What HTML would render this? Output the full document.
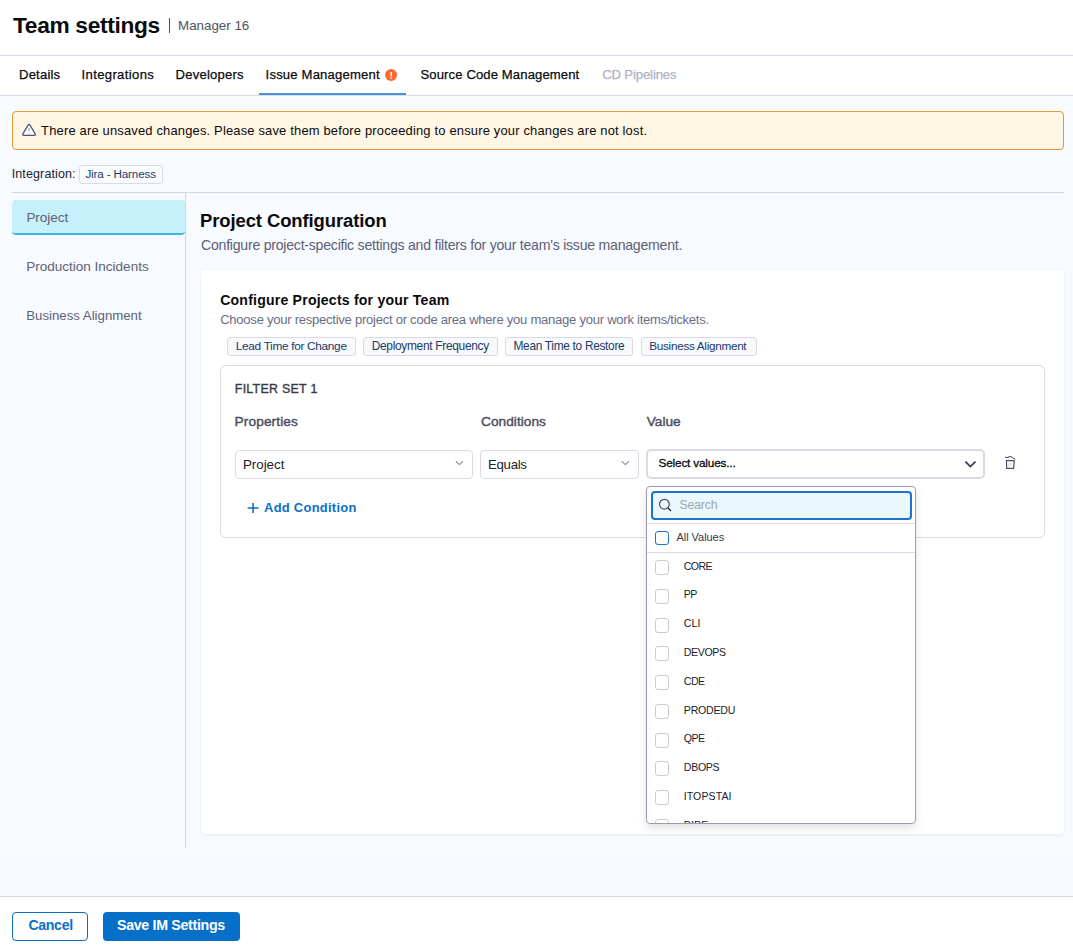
<!DOCTYPE html>
<html><head><meta charset="utf-8">
<style>
*{box-sizing:border-box;margin:0;padding:0}
html,body{width:1073px;height:951px;overflow:hidden;background:#fff;font-family:"Liberation Sans",sans-serif;color:#0b0b0d}
.a{position:absolute}
.t{position:absolute;white-space:nowrap;z-index:5;line-height:normal}
</style></head><body>
<!-- header -->
<div class="a" style="left:0;top:0;width:1073px;height:56px;background:#fff;border-bottom:1px solid #d9dae6;z-index:1"></div>
<div class="a" style="left:169px;top:18px;width:1px;height:15px;background:#4f5162;z-index:2"></div>
<!-- tabs -->
<div class="a" style="left:0;top:56px;width:1073px;height:40px;background:#fff;border-bottom:1px solid #d9dae6;z-index:1"></div>
<div class="a" style="left:259px;top:93px;width:147px;height:2px;background:#4a90dc;z-index:2"></div>
<!-- content bg -->
<div class="a" style="left:0;top:96px;width:1073px;height:800px;background:linear-gradient(to bottom,#f7fafe 0,#f7fafe 760px,#f7f8fa 772px,#f7f8fa 800px);z-index:1"></div>
<!-- alert -->
<div class="a" style="left:12px;top:111px;width:1052px;height:39px;background:#fff6e3;border:1px solid #e29739;border-radius:4px;z-index:2"></div>
<!-- integration tag -->
<div class="a" style="left:79px;top:165px;width:84px;height:19px;border:1px solid #d9dae6;border-radius:3px;background:#fafbfc;z-index:2"></div>
<div class="a" style="left:12px;top:192px;width:1052px;height:1px;background:#d3d4e4;z-index:2"></div>
<div class="a" style="left:185px;top:192px;width:1px;height:656px;background:#d3d4e4;z-index:2"></div>
<div class="a" style="left:12px;top:200px;width:173px;height:35px;background:#c6f0fa;border-bottom:2px solid #3ab8e6;border-radius:4px;z-index:2"></div>
<!-- card -->
<div class="a" style="left:201px;top:270px;width:863px;height:564px;background:#fff;border-radius:4px;box-shadow:0 0 1px rgba(40,41,61,.04),0 1px 3px rgba(96,97,112,.10);z-index:2"></div>
<!-- tags -->
<div class="a" style="left:227px;top:337px;width:129px;height:19px;border:1px solid #d9dae6;border-radius:3px;background:#f8f9fb;z-index:3"></div>
<div class="a" style="left:363px;top:337px;width:135px;height:19px;border:1px solid #d9dae6;border-radius:3px;background:#f8f9fb;z-index:3"></div>
<div class="a" style="left:505px;top:337px;width:128px;height:19px;border:1px solid #d9dae6;border-radius:3px;background:#f8f9fb;z-index:3"></div>
<div class="a" style="left:641px;top:337px;width:116px;height:19px;border:1px solid #d9dae6;border-radius:3px;background:#f8f9fb;z-index:3"></div>
<!-- filter box -->
<div class="a" style="left:220px;top:365px;width:825px;height:173px;border:1px solid #d9dae6;border-radius:6px;background:#fff;z-index:3"></div>
<!-- inputs -->
<div class="a" style="left:235px;top:450px;width:238px;height:29px;border:1px solid #d9dae6;border-radius:4px;background:#fff;z-index:4"></div>
<div class="a" style="left:480px;top:450px;width:159px;height:29px;border:1px solid #d9dae6;border-radius:4px;background:#fff;z-index:4"></div>
<div class="a" style="left:646px;top:449px;width:339px;height:30px;border:2px solid #d9dae6;border-radius:5px;background:#fff;z-index:4"></div>
<!-- footer -->
<div class="a" style="left:0;top:896px;width:1073px;height:55px;background:#fff;border-top:1px solid #d8d9de;z-index:1"></div>
<div class="a" style="left:12px;top:912px;width:76px;height:29px;border:1px solid #0a6ebd;border-radius:4px;background:#fff;z-index:2"></div>
<div class="a" style="left:103px;top:912px;width:137px;height:29px;border-radius:4px;background:#0670c9;z-index:2"></div>
<!-- main icons -->
<svg class="a" style="left:0;top:0;z-index:6" width="1073" height="951" viewBox="0 0 1073 951">
  <path d="M28.1 125.1 Q29.05 123.6 30 125.1 L35.2 133.9 Q35.9 135.3 34.4 135.3 L23.7 135.3 Q22.2 135.3 22.9 133.9 Z" fill="#fff" stroke="#4f5172" stroke-width="1.25" stroke-linejoin="round"/>
  <path d="M29.05 127.8 V131.2" stroke="#7a7c92" stroke-width="0.9"/>
  <rect x="28.6" y="132.9" width="0.9" height="0.8" fill="#7a7c92"/>
  <circle cx="391.1" cy="75" r="6" fill="#fe6b2f"/>
  <path d="M391.2 72 V76.3" stroke="#fff" stroke-width="1.5"/>
  <rect x="390.45" y="77.3" width="1.5" height="1.4" fill="#fff"/>
  <path d="M455.9 461.2 L459.4 464.7 L462.9 461.2" fill="none" stroke="#9a9cb0" stroke-width="1.3"/>
  <path d="M621.9 461.2 L625.4 464.7 L628.9 461.2" fill="none" stroke="#9a9cb0" stroke-width="1.3"/>
  <path d="M965.4 461.6 L970.4 466.6 L975.4 461.6" fill="none" stroke="#383f50" stroke-width="1.8"/>
  <path d="M1005.3 457 Q1006.6 458 1008.3 457.2 Q1010.2 455.7 1012 457.4 L1015.4 459.4" fill="none" stroke="#4f5162" stroke-width="1.1"/>
  <path d="M1005.7 460.6 H1014.6 M1006.5 461 L1006.6 468.4 H1013.6 L1014.3 461" fill="none" stroke="#4f5162" stroke-width="1.2"/>
  <path d="M1008.6 463 V466.5 M1010.9 463 V466.5" stroke="#d5d6de" stroke-width="0.9"/>
  <path d="M247.6 508 H258.5 M253.1 503 V513" stroke="#0b6fc6" stroke-width="1.6"/>
</svg>
<!-- dropdown -->
<div class="a" style="left:646px;top:486px;width:270px;height:338px;border:1px solid #9a9bb1;border-radius:4px;background:#fff;box-shadow:0 4px 8px rgba(96,97,112,.18);overflow:hidden;z-index:10">
  <div class="a" style="left:4px;top:4px;width:261px;height:29px;border:2px solid #1a73d1;border-radius:4px;background:#eaf7fd"></div>
  <div class="a" style="left:0;top:36px;width:268px;height:1px;background:#d9dae6"></div>
  <div class="a" style="left:8px;top:44px;width:14px;height:14px;border:1px solid #1a73d1;border-radius:3px"></div>
  <div class="a" style="left:0;top:65px;width:268px;height:1px;background:#d9dae6"></div>
  <div class="a" style="left:8px;top:73.00px;width:14px;height:15px;border:1px solid #c9cad3;border-radius:3px;background:#fff"></div>
<div class="a" style="left:8px;top:101.78px;width:14px;height:15px;border:1px solid #c9cad3;border-radius:3px;background:#fff"></div>
<div class="a" style="left:8px;top:130.56px;width:14px;height:15px;border:1px solid #c9cad3;border-radius:3px;background:#fff"></div>
<div class="a" style="left:8px;top:159.34px;width:14px;height:15px;border:1px solid #c9cad3;border-radius:3px;background:#fff"></div>
<div class="a" style="left:8px;top:188.12px;width:14px;height:15px;border:1px solid #c9cad3;border-radius:3px;background:#fff"></div>
<div class="a" style="left:8px;top:216.90px;width:14px;height:15px;border:1px solid #c9cad3;border-radius:3px;background:#fff"></div>
<div class="a" style="left:8px;top:245.68px;width:14px;height:15px;border:1px solid #c9cad3;border-radius:3px;background:#fff"></div>
<div class="a" style="left:8px;top:274.46px;width:14px;height:15px;border:1px solid #c9cad3;border-radius:3px;background:#fff"></div>
<div class="a" style="left:8px;top:303.24px;width:14px;height:15px;border:1px solid #c9cad3;border-radius:3px;background:#fff"></div>
<div class="a" style="left:8px;top:332.02px;width:14px;height:15px;border:1px solid #c9cad3;border-radius:3px;background:#fff"></div>

</div>
<svg class="a" style="left:0;top:0;z-index:21" width="1073" height="951" viewBox="0 0 1073 951">
  <circle cx="664.4" cy="504.2" r="4.9" fill="none" stroke="#4f5162" stroke-width="1.2"/>
  <path d="M668.1 508 L670.6 510.5" stroke="#22222a" stroke-width="1.3" stroke-linecap="round"/>
</svg>
<div class="t" style="left:13.00px;top:11.72px;font-size:22.73px;letter-spacing:-0.320px;font-weight:bold;color:#0b0b0d;">Team settings</div>
<div class="t" style="left:178.10px;top:17.90px;font-size:13.37px;letter-spacing:-0.019px;font-weight:normal;color:#4f5162;">Manager 16</div>
<div class="t" style="left:19.00px;top:66.90px;font-size:13.08px;letter-spacing:0.194px;font-weight:normal;color:#0b0b0d;-webkit-text-stroke:0.25px currentColor;">Details</div>
<div class="t" style="left:81.50px;top:66.90px;font-size:13.08px;letter-spacing:0.363px;font-weight:normal;color:#0b0b0d;-webkit-text-stroke:0.25px currentColor;">Integrations</div>
<div class="t" style="left:175.60px;top:66.90px;font-size:13.08px;letter-spacing:0.199px;font-weight:normal;color:#0b0b0d;-webkit-text-stroke:0.25px currentColor;">Developers</div>
<div class="t" style="left:265.60px;top:66.90px;font-size:13.08px;letter-spacing:0.180px;font-weight:normal;color:#0b0b0d;-webkit-text-stroke:0.25px currentColor;">Issue Management</div>
<div class="t" style="left:420.50px;top:66.90px;font-size:13.08px;letter-spacing:0.116px;font-weight:normal;color:#0b0b0d;-webkit-text-stroke:0.25px currentColor;">Source Code Management</div>
<div class="t" style="left:602.20px;top:66.90px;font-size:13.08px;letter-spacing:-0.114px;font-weight:normal;color:#b0b1c3;-webkit-text-stroke:0.25px currentColor;">CD Pipelines</div>
<div class="t" style="left:41.10px;top:122.80px;font-size:12.94px;letter-spacing:0.174px;font-weight:normal;color:#0b0b0d;">There are unsaved changes. Please save them before proceeding to ensure your changes are not lost.</div>
<div class="t" style="left:11.70px;top:166.90px;font-size:12.5px;letter-spacing:0.121px;font-weight:normal;color:#22222a;">Integration:</div>
<div class="t" style="left:85.40px;top:166.90px;font-size:11.63px;letter-spacing:-0.134px;font-weight:normal;color:#1b3a6b;z-index:5;">Jira - Harness</div>
<div class="t" style="left:26.40px;top:210.10px;font-size:13.52px;letter-spacing:-0.052px;font-weight:normal;color:#5f6175;z-index:5;">Project</div>
<div class="t" style="left:26.30px;top:259.20px;font-size:13.52px;letter-spacing:-0.006px;font-weight:normal;color:#5f6175;">Production Incidents</div>
<div class="t" style="left:26.30px;top:307.90px;font-size:13.23px;letter-spacing:-0.001px;font-weight:normal;color:#5f6175;">Business Alignment</div>
<div class="t" style="left:200.00px;top:209.70px;font-size:18.46px;letter-spacing:-0.090px;font-weight:bold;color:#0b0b0d;">Project Configuration</div>
<div class="t" style="left:201.00px;top:236.70px;font-size:14.1px;letter-spacing:-0.234px;font-weight:normal;color:#5d5f78;">Configure project-specific settings and filters for your team's issue management.</div>
<div class="t" style="left:220.20px;top:291.90px;font-size:14.1px;letter-spacing:0.197px;font-weight:bold;color:#0b0b0d;z-index:5;">Configure Projects for your Team</div>
<div class="t" style="left:220.20px;top:312.30px;font-size:13.08px;letter-spacing:-0.272px;font-weight:normal;color:#6b6d85;z-index:5;">Choose your respective project or code area where you manage your work items/tickets.</div>
<div class="t" style="left:235.80px;top:338.97px;font-size:11.83px;letter-spacing:-0.309px;font-weight:normal;color:#1b3a6b;z-index:5;">Lead Time for Change</div>
<div class="t" style="left:371.70px;top:339.00px;font-size:11.92px;letter-spacing:-0.297px;font-weight:normal;color:#1b3a6b;z-index:5;">Deployment Frequency</div>
<div class="t" style="left:513.50px;top:338.99px;font-size:11.9px;letter-spacing:-0.304px;font-weight:normal;color:#1b3a6b;z-index:5;">Mean Time to Restore</div>
<div class="t" style="left:649.30px;top:338.94px;font-size:11.76px;letter-spacing:-0.307px;font-weight:normal;color:#1b3a6b;z-index:5;">Business Alignment</div>
<div class="t" style="left:234.80px;top:381.72px;font-size:12.4px;letter-spacing:0.278px;font-weight:normal;color:#383946;z-index:5;-webkit-text-stroke:0.35px currentColor;">FILTER SET 1</div>
<div class="t" style="left:234.60px;top:414.00px;font-size:13.66px;letter-spacing:0.110px;font-weight:normal;color:#4f5162;z-index:5;-webkit-text-stroke:0.45px currentColor;">Properties</div>
<div class="t" style="left:481.10px;top:414.00px;font-size:13.66px;letter-spacing:0.033px;font-weight:normal;color:#4f5162;z-index:5;-webkit-text-stroke:0.45px currentColor;">Conditions</div>
<div class="t" style="left:646.80px;top:414.00px;font-size:13.66px;letter-spacing:-0.030px;font-weight:normal;color:#4f5162;z-index:5;-webkit-text-stroke:0.45px currentColor;">Value</div>
<div class="t" style="left:242.90px;top:456.80px;font-size:13.37px;letter-spacing:-0.011px;font-weight:normal;color:#22222a;z-index:5;">Project</div>
<div class="t" style="left:488.10px;top:456.79px;font-size:13.19px;letter-spacing:-0.306px;font-weight:normal;color:#22222a;z-index:5;">Equals</div>
<div class="t" style="left:658.60px;top:456.10px;font-size:11.77px;letter-spacing:-0.181px;font-weight:normal;color:#0b0b0d;z-index:5;-webkit-text-stroke:0.3px currentColor;">Select values...</div>
<div class="t" style="left:264.10px;top:499.90px;font-size:12.94px;letter-spacing:0.259px;font-weight:bold;color:#0b6fc6;z-index:5;">Add Condition</div>
<div class="t" style="left:679.50px;top:497.85px;font-size:12.21px;letter-spacing:-0.116px;font-weight:normal;color:#9ea6b4;z-index:20;">Search</div>
<div class="t" style="left:676.50px;top:531.10px;font-size:11.05px;letter-spacing:-0.064px;font-weight:normal;color:#383946;z-index:20;">All Values</div>
<div class="t" style="left:683.80px;top:559.70px;font-size:10.6px;letter-spacing:-0.600px;font-weight:normal;color:#22222a;z-index:20;">CORE</div>
<div class="t" style="left:683.80px;top:588.48px;font-size:10.6px;letter-spacing:-0.600px;font-weight:normal;color:#22222a;z-index:20;">PP</div>
<div class="t" style="left:683.80px;top:617.26px;font-size:10.6px;letter-spacing:0.029px;font-weight:normal;color:#22222a;z-index:20;">CLI</div>
<div class="t" style="left:683.80px;top:646.04px;font-size:10.6px;letter-spacing:-0.398px;font-weight:normal;color:#22222a;z-index:20;">DEVOPS</div>
<div class="t" style="left:683.80px;top:674.82px;font-size:10.6px;letter-spacing:-0.500px;font-weight:normal;color:#22222a;z-index:20;">CDE</div>
<div class="t" style="left:683.80px;top:703.60px;font-size:10.6px;letter-spacing:-0.237px;font-weight:normal;color:#22222a;z-index:20;">PRODEDU</div>
<div class="t" style="left:683.80px;top:732.38px;font-size:10.6px;letter-spacing:-0.600px;font-weight:normal;color:#22222a;z-index:20;">QPE</div>
<div class="t" style="left:683.80px;top:761.16px;font-size:10.6px;letter-spacing:-0.306px;font-weight:normal;color:#22222a;z-index:20;">DBOPS</div>
<div class="t" style="left:683.80px;top:789.94px;font-size:10.6px;letter-spacing:0.051px;font-weight:normal;color:#22222a;z-index:20;">ITOPSTAI</div>
<div class="t" style="left:683.80px;top:818.72px;font-size:10.6px;letter-spacing:0.100px;font-weight:normal;color:#22222a;z-index:20;clip-path:polygon(0 0,100% 0,100% 4.28px,0 4.28px);">PIPE</div>
<div class="t" style="left:28.40px;top:917.31px;font-size:14.13px;letter-spacing:-0.319px;font-weight:bold;color:#0b6fc6;z-index:5;">Cancel</div>
<div class="t" style="left:117.00px;top:917.34px;font-size:14.21px;letter-spacing:-0.311px;font-weight:bold;color:#ffffff;z-index:5;">Save IM Settings</div>
</body></html>
